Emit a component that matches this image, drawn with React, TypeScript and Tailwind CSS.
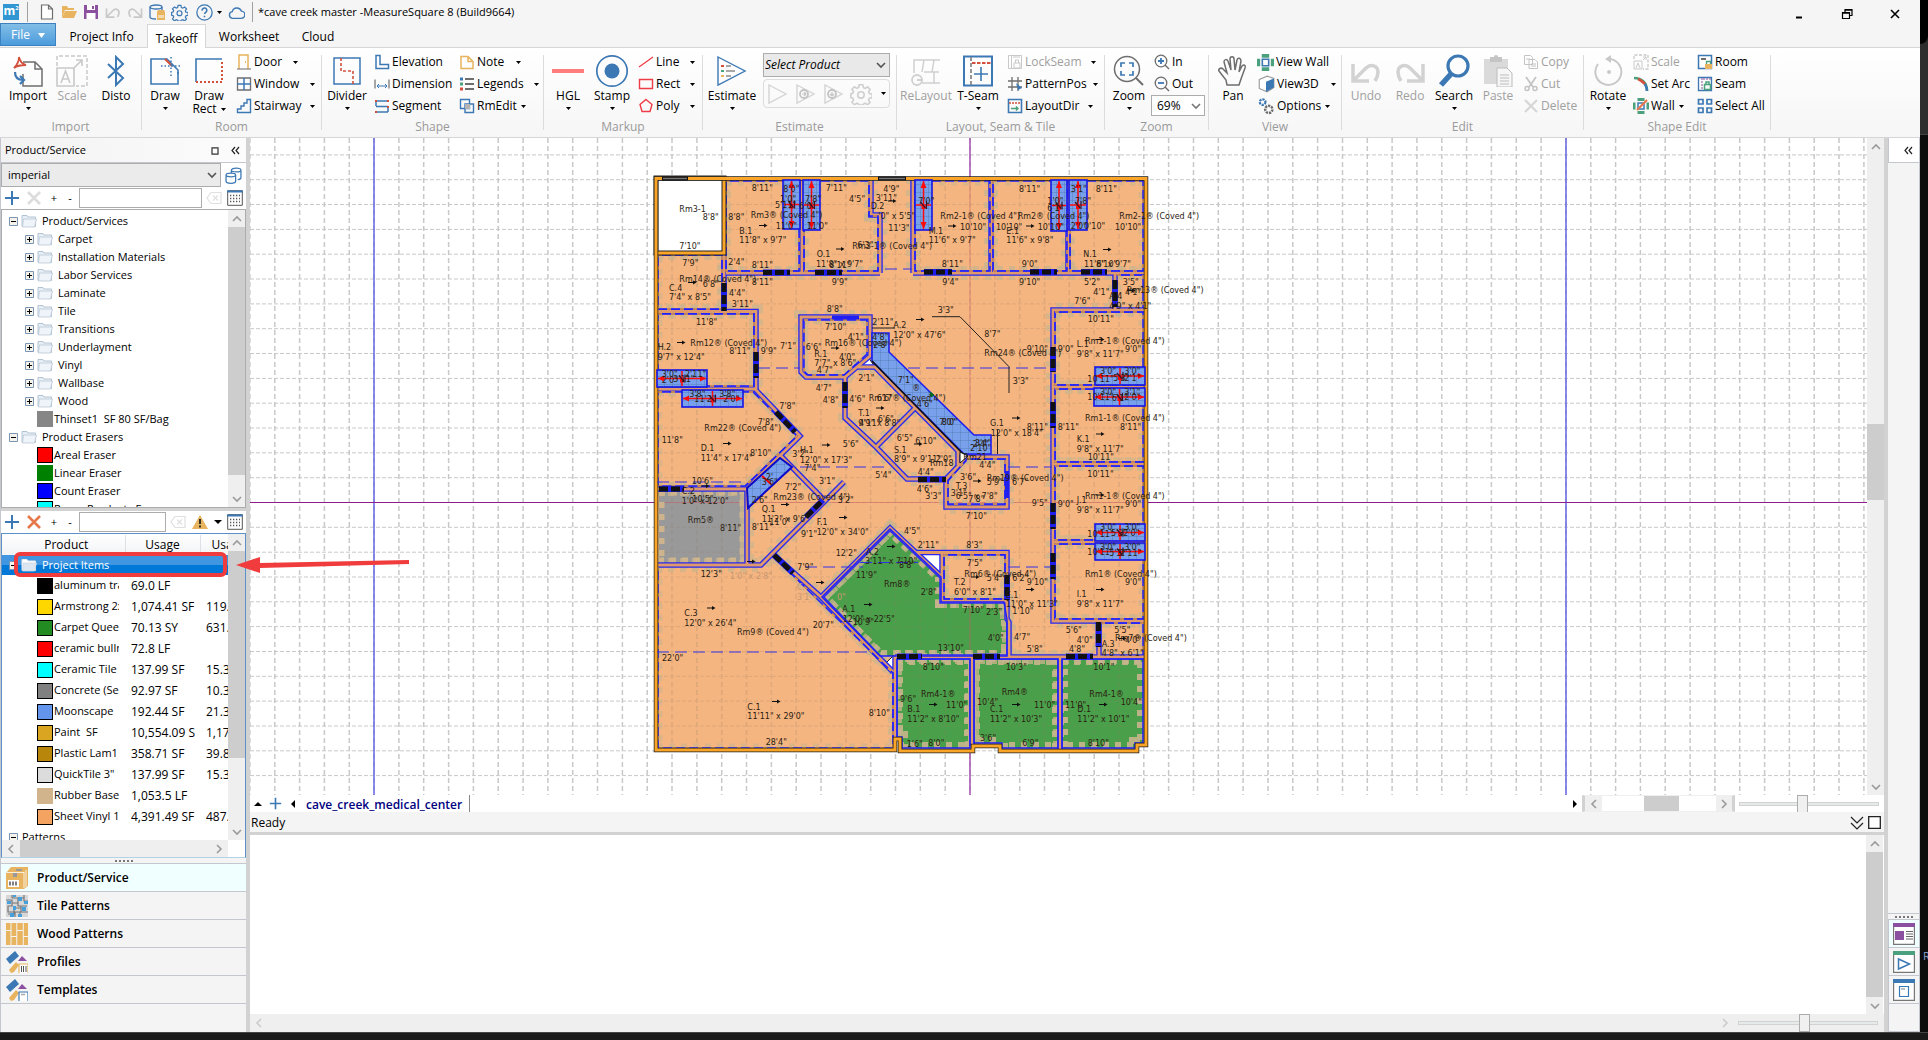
import React from "react";

const BLUE = "#3c78b4";
const RED = "#d2503c";
const GREY = "#c9c9c9";
const DARK = "#6e6e6e";
const GOLD = "#e8b45f";
const GREEN = "#4ba07d";
const PURPLE = "#8c50a0";

type Kids = { children?: React.ReactNode };

function Ico({ s = 16, v = 16, children }: Kids & { s?: number; v?: number }) {
  return (
    <svg width={s} height={s} viewBox={`0 0 ${v} ${v}`} fill="none" className="shrink-0" aria-hidden="true">
      {children}
    </svg>
  );
}

const Tri = ({ className = "" }: { className?: string }) => (
  <svg width="5" height="3" viewBox="0 0 5 3" className={`shrink-0 ${className}`} aria-hidden="true">
    <path d="M0 0h5L2.5 3z" fill="#000" />
  </svg>
);

const Chev = ({ d = "down", c = "#9a9a9a" }: { d?: "down" | "up" | "left" | "right"; c?: string }) => {
  const p = { down: "M1 3l4 4 4-4", up: "M1 7l4-4 4 4", left: "M7 1L3 5l4 4", right: "M3 1l4 4-4 4" }[d];
  return (
    <svg width="10" height="10" viewBox="0 0 10 10" fill="none" className="shrink-0" aria-hidden="true">
      <path d={p} stroke={c} strokeWidth="1.6" />
    </svg>
  );
};

/* ---------- ribbon pieces ---------- */

function Big({ icon, label, sub, arrow, off, wide }: { icon: React.ReactNode; label: string; sub?: string; arrow?: boolean; off?: boolean; wide?: boolean }) {
  return (
    <button className={`flex h-[66px] flex-col items-center ${wide ? "w-[52px]" : "w-11"} ${off ? "text-[#a0a0a0]" : "text-black"}`}>
      <span className="flex h-8 items-center">{icon}</span>
      <span className="mt-[2px] text-xs leading-[14px] whitespace-nowrap">{label}</span>
      {sub ? (
        <span className="flex items-center gap-1 text-xs leading-3">
          {sub}
          <Tri />
        </span>
      ) : (
        arrow && <Tri className="mt-[4px]" />
      )}
    </button>
  );
}

function Small({ icon, label, arrow, off, w = "" }: { icon: React.ReactNode; label: string; arrow?: boolean; off?: boolean; w?: string }) {
  return (
    <button className={`flex h-[22px] items-center gap-[2px] ${off ? "text-[#a0a0a0]" : "text-black"}`}>
      {icon}
      <span className={`text-left text-xs leading-4 whitespace-nowrap ${w}`}>{label}</span>
      {arrow && <Tri />}
    </button>
  );
}

function Group({ name, w, children }: Kids & { name: string; w: string }) {
  return (
    <section className={`flex shrink-0 flex-col ${w}`} aria-label={name}>
      <div className="flex h-full border-r border-[#dcdcdc]">
        <div className="flex w-full flex-col">
          <div className="flex h-[65px]">{children}</div>
          <div className="text-center text-xs leading-[14px] text-[#9a9a9a]">{name}</div>
        </div>
      </div>
    </section>
  );
}

const Col = ({ children, c = "" }: Kids & { c?: string }) => <div className={`-mt-[4px] flex flex-col ${c}`}>{children}</div>;

function Ribbon() {
  return (
    <div className="flex h-[91px] border-t border-b border-[#d6d6d6] bg-linear-to-b from-white to-[#f6f6f6] pt-[7px] pb-[7px]">
      <Group name="Import" w="w-[142px]">
        <div className="flex pl-[6px]">
          <Big label="Import" arrow icon={<Ico s={32} v={32}>
            <path d="M11 7h12l7 7v17H11V19" stroke={DARK} strokeWidth="1.5" /><path d="M23 7v7h7" stroke={DARK} strokeWidth="1.500" />
            <path d="M2 13c3-3 5-7 5-11 1 5 3 7 7 8-5 0-8 0-12 3z" stroke={RED} strokeWidth="1.800" /><path d="M3 17c0 6 3 8 8 8M8 21l4 4-4 4" stroke={BLUE} strokeWidth="2.200" /></Ico>} />
          <Big label="Scale" off icon={<Ico s={32} v={32}>
            <path d="M1 11V1h30v30H20" stroke={GREY} strokeWidth="1.500" strokeDasharray="4 2" /><path d="M1 13h17v18H1zM5 28l4.500-12L14 28M7 24h5M17 14l9-9M20 5h6v6" stroke={GREY} strokeWidth="1.600" /></Ico>} />
          <Big label="Disto" icon={<Ico s={32} v={32}><path d="M8 9l15 14-7 7V2l7 7L8 23" stroke={BLUE} strokeWidth="2" /></Ico>} />
        </div>
      </Group>
      <Group name="Room" w="w-[180px]">
        <div className="flex pl-[1px]">
          <Big label="Draw" arrow icon={<Ico s={32} v={32}>
            <path d="M15 4H2v25h27V17" stroke={BLUE} strokeWidth="1.600" /><path d="M15 4h3l11 11v4" stroke={BLUE} strokeWidth="1.600" /><path d="M16 4l7 7" stroke={RED} strokeWidth="2" /><path d="M22 2v20M12 11h19" stroke={BLUE} strokeWidth="1.500" strokeDasharray="1.500 2" /></Ico>} />
          <Big label="Draw" sub="Rect" icon={<Ico s={32} v={32}>
            <path d="M3 27V4h26" stroke={BLUE} strokeWidth="1.600" /><path d="M3 27h26V5" stroke={RED} strokeWidth="2" strokeDasharray="2 2" /></Ico>} />
        </div>
        <Col c="pl-[5px]">
          <Small label="Door" w="w-[37px]" arrow icon={<Ico><path d="M3 15V1h9v14" stroke={GOLD} strokeWidth="1.500" /><path d="M1 15h14" stroke={DARK} /><path d="M9.500 7v2" stroke={GOLD} /></Ico>} />
          <Small label="Window" w="w-[54px]" arrow icon={<Ico><path d="M1.500 2h13v12h-13z" stroke={DARK} strokeWidth="1.300" /><path d="M8 2v12M1 8h14" stroke={BLUE} strokeWidth="1.500" /></Ico>} />
          <Small label="Stairway" w="w-[54px]" arrow icon={<Ico><path d="M1.500 14.500V11H5V8h3V5h3V1.500h3.500v13z" stroke={BLUE} strokeWidth="1.400" /></Ico>} />
        </Col>
      </Group>
      <Group name="Shape" w="w-[222px]">
        <div className="flex pl-[3px]">
          <Big label="Divider" arrow icon={<Ico s={32} v={32}><path d="M3 3h26v26H3z" stroke={BLUE} strokeWidth="1.500" /><path d="M10 3v13h12v13" stroke={RED} strokeWidth="1.600" strokeDasharray="3 2" /></Ico>} />
        </div>
        <Col c="pl-[5px] w-[90px]">
          <Small label="Elevation" icon={<Ico><path d="M2 1.500h4v9h8.500v4H2z" stroke={BLUE} strokeWidth="1.500" /></Ico>} />
          <Small label="Dimension" icon={<Ico><path d="M1 3.500v9M15 3.500v9" stroke="#8a8a8a" strokeWidth="1.500" /><path d="M3 10h10M5 8l-2 2 2 2M11 8l2 2-2 2" stroke={BLUE} /></Ico>} />
          <Small label="Segment" icon={<Ico><path d="M2 3h12M2 8.500h12M2 14h12M2 3v5M14 9v5" stroke={BLUE} strokeWidth="1.500" /><path d="M1 2h2v2H1zM13 2h2v2h-2zM13 8h2v2h-2zM1 13h2v2H1z" fill={RED} /></Ico>} />
        </Col>
        <Col>
          <Small label="Note" w="w-[37px]" arrow icon={<Ico><path d="M2 2.500h7l5 5v7H2zM9 2.500v5h5" stroke={GOLD} strokeWidth="1.500" /></Ico>} />
          <Small label="Legends" w="w-[55px]" arrow icon={<Ico><path d="M6 3h9M6 8h9M6 13h9" stroke={DARK} strokeWidth="2" /><path d="M1 1.500h3v3H1z" fill={BLUE} /><path d="M1 6.500h3v3H1z" fill={GREEN} /><path d="M1 11.500h3v3H1z" fill={RED} /></Ico>} />
          <Small label="RmEdit" w="w-[42px]" arrow icon={<Ico><path d="M1.500 1.500h9v9h-9zM6 6h8.500v8.500H6z" stroke={BLUE} strokeWidth="1.400" /><path d="M6 6h5v5H6z" fill="#b4b4b4" /></Ico>} />
        </Col>
      </Group>
      <Group name="Markup" w="w-[159px]">
        <div className="flex pl-[2px]">
          <Big label="HGL" arrow icon={<Ico s={32} v={32}><path d="M0 16h32" stroke="#ff7d7d" strokeWidth="4" /></Ico>} />
          <Big label="Stamp" arrow icon={<Ico s={34} v={34}><circle cx="17" cy="17" r="15.200" stroke={BLUE} strokeWidth="1.700" /><circle cx="17" cy="17" r="7.500" fill={BLUE} /></Ico>} />
        </div>
        <Col c="pl-[4px]">
          <Small label="Line" w="w-8" arrow icon={<Ico><path d="M1 13L15 3" stroke="#f03c46" strokeWidth="1.300" /></Ico>} />
          <Small label="Rect" w="w-8" arrow icon={<Ico><path d="M1.500 3.500h13v9h-13z" stroke="#f03c46" strokeWidth="1.400" /></Ico>} />
          <Small label="Poly" w="w-8" arrow icon={<Ico><path d="M8 1.500l6 5-2 7H4l-2-7z" stroke="#f03c46" strokeWidth="1.400" /></Ico>} />
        </Col>
      </Group>
      <Group name="Estimate" w="w-[194px]">
        <div className="flex pl-[3px]">
          <Big wide label="Estimate" arrow icon={<Ico s={32} v={32}><path d="M2 2l27 14L2 30z" stroke={BLUE} strokeWidth="1.400" /><path d="M10 11h5M10 16h9M10 21h5" stroke="#8a8a8a" strokeWidth="1.500" /><path d="M5 10h3v2H5z" fill={RED} /><path d="M5 15h3v2H5z" fill={GREEN} /><path d="M5 20h3v2H5z" fill={GOLD} /></Ico>} />
        </div>
        <div className="-mt-[2px] flex w-[128px] flex-col gap-[2px] pl-[5px]">
          <div className="relative flex h-6 w-[127px] items-center">
            <select aria-label="Select Product" className="h-6 w-full appearance-none border border-[#acacac] bg-[#e9e9e9] pl-[1px] text-xs text-black italic">
              <option>Select Product</option>
            </select>
            <span className="pointer-events-none absolute right-1"><Chev c="#555" /></span>
          </div>
          <div className="flex h-[29px] w-[127px] items-center gap-[6px] rounded-sm border border-[#dcdcdc] pl-[3px]">
            {[0, 1, 2].map((i) => (
              <button key={i} aria-label={`Run ${i + 1}`}>
                <Ico s={22} v={22}><path d="M2 2l17 9-17 9z" stroke="#d4d4d4" strokeWidth="1.400" />{i > 0 && <><circle cx="9" cy="11" r="4" stroke="#c4c4c4" strokeWidth="1.800" /><path d={i === 1 ? "M7 11h4M9 9l2 2-2 2" : "M9 9v4M7 11l2 2 2-2"} stroke="#c4c4c4" strokeWidth="1.200" /></>}</Ico>
              </button>
            ))}
            <button aria-label="Estimate settings" className="-ml-[1px] flex items-center gap-[9px]"><Gear s={22} c="#cfcfcf" /><Tri /></button>
          </div>
        </div>
      </Group>
      <Group name="Layout, Seam &amp; Tile" w="w-[208px]">
        <div className="flex pl-[3px]">
          <Big wide off label="ReLayout" icon={<Ico s={32} v={32}><path d="M4 18V5h26M14 5l-2 12M24 5l-2 12M14 17h15M12 28h18M24 17v11" stroke="#d0d0d0" strokeWidth="1.500" /><circle cx="7" cy="25" r="5" stroke="#d0d0d0" strokeWidth="1.800" /><path d="M7 25h6" stroke="#d0d0d0" strokeWidth="2" /></Ico>} />
          <Big wide label="T-Seam" arrow icon={<Ico s={32} v={32}><path d="M2 1.500h28v29H2z" stroke={BLUE} strokeWidth="2" /><path d="M9 2v28" stroke="#8a8a8a" strokeWidth="1.800" strokeDasharray="4 2" /><path d="M10 8h19" stroke={RED} strokeWidth="2" strokeDasharray="3.500 1.500" /><path d="M19 12v14M12 19h14" stroke={BLUE} strokeWidth="1.600" /></Ico>} />
        </div>
        <Col c="pl-[3px]">
          <Small off label="LockSeam" w="w-16" arrow icon={<Ico><path d="M1.500 1.500h13v13h-13z" stroke={GREY} /><path d="M4.500 2v12M7 9h6v5H7zM8.500 9V6h3v3M6 3h7" stroke={GREY} /></Ico>} />
          <Small label="PatternPos" w="w-[66px]" arrow icon={<Ico><path d="M5 1v14M11 1v14M1 5h14M1 11h14" stroke={DARK} strokeWidth="1.300" /><path d="M9 7l6 5-4 2z" fill={BLUE} /></Ico>} />
          <Small label="LayoutDir" w="w-[61px]" arrow icon={<Ico><path d="M1.500 1.500h13v13h-13z" stroke={BLUE} strokeWidth="1.600" /><path d="M2 5h12" stroke={RED} strokeWidth="1.500" strokeDasharray="2 1" /><path d="M4 10.500h7M9 8.500l2 2-2 2" stroke={GREEN} strokeWidth="1.400" /></Ico>} />
        </Col>
      </Group>
      <Group name="Zoom" w="w-[104px]">
        <div className="flex pl-[2px]">
          <Big label="Zoom" arrow icon={<Ico s={32} v={32}><circle cx="14" cy="14" r="12.500" stroke={DARK} strokeWidth="1.500" /><path d="M23 23l7 7" stroke={DARK} strokeWidth="2" /><path d="M8 12V8h4M16 8h4v4M20 16v4h-4M12 20H8v-4" stroke={BLUE} strokeWidth="1.700" /></Ico>} />
        </div>
        <Col>
          <div className="pl-[3px]">
            {["In", "Out"].map((t) => (
              <Small key={t} label={t} icon={<Ico><circle cx="7" cy="7" r="5.800" stroke={DARK} strokeWidth="1.300" /><path d="M11 11l4 4" stroke={DARK} strokeWidth="1.500" /><path d={t === "In" ? "M4 7h6M7 4v6" : "M4 7h6"} stroke={BLUE} strokeWidth="1.800" /></Ico>} />
            ))}
          </div>
          <div className="relative flex h-[21px] w-[54px] items-center">
            <select aria-label="Zoom level" className="h-full w-full appearance-none border border-[#acacac] bg-white pl-[5px] text-xs">
              <option>69%</option>
            </select>
            <span className="pointer-events-none absolute right-1"><Chev c="#777" /></span>
          </div>
        </Col>
      </Group>
      <Group name="View" w="w-[133px]">
        <div className="flex pl-[2px]">
          <Big label="Pan" icon={<Ico s={32} v={32}><path d="M10 30l-1-5-7-9c-1-2 2-4 4-2l4 4L7 7c0-3 3-3 4-1l3 9-1-11c0-3 4-3 4 0l1 11 2-10c1-3 4-2 4 1l-2 11 3-6c2-2 4-1 3 2l-4 11-2 6z" stroke={DARK} strokeWidth="1.500" /></Ico>} />
        </div>
        <Col c="pl-[2px]">
          <Small label="View Wall" icon={<Ico s={17}><path d="M4.500 0h7v3.500h-7zM4.500 12.500h7V16h-7z" fill={GREEN} /><path d="M0 4.500h3v7H0zM13 4.500h3v7h-3z" fill={GREEN} /><path d="M5 5h6v6H5z" stroke={BLUE} strokeWidth="1.500" /></Ico>} />
          <Small label="View3D" w="w-[52px]" arrow icon={<Ico s={18}><path d="M2 4l7-3 6 2v8l-6 4-7-3z" fill="#fff" stroke="#9a9a9a" /><path d="M8 6l7-3v8l-7 4z" fill={BLUE} /></Ico>} />
          <Small label="Options" w="w-[46px]" arrow icon={<Ico s={18}><circle cx="5" cy="4.500" r="2.500" stroke={BLUE} strokeWidth="2" strokeDasharray="2 .8" /><circle cx="10.500" cy="11" r="3.200" stroke={DARK} strokeWidth="2.200" strokeDasharray="2 .8" /></Ico>} />
        </Col>
      </Group>
      <Group name="Edit" w="w-[242px]">
        <div className="flex pl-[2px]">
          <Big off label="Undo" icon={<Ico s={32} v={32}><path d="M3 9v17h16M4 25L16 13c5-5 12-2 12 4 0 3-1 6-3 9" stroke="#d2d2d2" strokeWidth="3.500" /></Ico>} />
          <Big off label="Redo" icon={<Ico s={32} v={32}><path d="M29 9v17H13M28 25L16 13c-5-5-12-2-12 4 0 3 1 6 3 9" stroke="#d2d2d2" strokeWidth="3.500" /></Ico>} />
          <Big label="Search" arrow icon={<Ico s={34} v={34}><circle cx="21" cy="12" r="10" stroke={BLUE} strokeWidth="3.200" /><path d="M14 20L4 31" stroke={BLUE} strokeWidth="5.500" /></Ico>} />
          <Big off label="Paste" icon={<Ico s={32} v={32}><path d="M2 4h24v25H2z" fill="#dadada" /><path d="M8 2h4a2 2 0 014 0h4v5H8z" fill="#c4c4c4" /><path d="M15 13h10l5 5v14H15z" fill="#f6f6f6" stroke="#bcbcbc" /><path d="M18 20h9M18 23h9M18 26h9M18 29h9" stroke="#bcbcbc" /></Ico>} />
        </div>
        <Col c="pl-[3px]">
          <Small off label="Copy" icon={<Ico><path d="M1.500 1.500h6l2 2v7h-8zM6 5.500h6l2.500 2.500v6.500H6zM3 5h4M8 10h5M8 12h5" stroke="#c4c4c4" /></Ico>} />
          <Small off label="Cut" icon={<Ico><path d="M3 1l7 10M13 1L6 11" stroke="#c4c4c4" strokeWidth="1.800" /><circle cx="4" cy="12.500" r="2" stroke="#c4c4c4" strokeWidth="1.500" /><circle cx="12" cy="12.500" r="2" stroke="#c4c4c4" strokeWidth="1.500" /></Ico>} />
          <Small off label="Delete" icon={<Ico><path d="M2 2l12 12M14 2L2 14" stroke="#d6d6d6" strokeWidth="2.200" /></Ico>} />
        </Col>
      </Group>
      <Group name="Shape Edit" w="w-[187px]">
        <div className="flex pl-[2px]">
          <Big label="Rotate" arrow icon={<Ico s={32} v={32}><path d="M6 9a13 13 0 1012-5" stroke={GREY} strokeWidth="2" /><path d="M19 0v8l-6-4z" fill={GREY} /><circle cx="17" cy="17" r="2" fill={GREY} /></Ico>} />
        </div>
        <Col c="pl-[3px] w-[67px]">
          <Small off label="Scale" icon={<Ico><path d="M1 5V1h14v14h-5" stroke={GREY} strokeDasharray="3 1.500" strokeWidth="1.300" /><path d="M1 7h8v8H1zM3 14l2-5 2 5M10 6l3-3M10 3h3v3" stroke={GREY} /></Ico>} />
          <Small label="Set Arc" icon={<Ico><path d="M1 2c8 0 13 5 13 13" stroke={GREEN} strokeWidth="2.500" /><path d="M5 3c3 1 5 3 7 5" stroke={RED} strokeWidth="2.500" /><path d="M12 8c1 2 2 4 2 7" stroke={BLUE} strokeWidth="2.500" /></Ico>} />
          <Small label="Wall" w="w-[26px]" arrow icon={<Ico><path d="M4.500 0h7v3h-7zM4.500 13h7v3h-7zM0 4.500h2.500v7H0zM13.500 4.500H16v7h-2.500z" fill={GREEN} /><path d="M5 5h6v6H5z" stroke={BLUE} strokeWidth="1.500" /><path d="M4 12L14 2" stroke="#e8784b" strokeWidth="2.200" /></Ico>} />
        </Col>
        <Col>
          <Small label="Room" icon={<Ico><path d="M1.500 1.500h13v13h-13z" stroke={BLUE} strokeWidth="1.500" /><path d="M4 4h5v2H4z" fill={DARK} /><path d="M8 10h7v5H8z" fill={GOLD} /><path d="M9.500 10V7.500h4V10" stroke={GREEN} strokeWidth="1.300" /></Ico>} />
          <Small label="Seam" icon={<Ico><path d="M1.500 1.500h13v13h-13z" stroke={BLUE} strokeWidth="1.300" /><path d="M5 2v12M6 3h8" stroke={PURPLE} strokeDasharray="2 1" /><path d="M7.500 8.500h6v5h-6zM9 8V6h3v2.500" stroke={GREEN} strokeWidth="1.500" /></Ico>} />
          <Small label="Select All" icon={<Ico><path d="M1.500 1.500h4.500v4.500H1.500zM10 1.500h4.500v4.500H10zM1.500 10h4.500v4.500H1.500zM10 10h4.500v4.500H10z" stroke={BLUE} strokeWidth="1.700" /></Ico>} />
        </Col>
      </Group>
    </div>
  );
}

function Gear({ s = 16, c = BLUE }: { s?: number; c?: string }) {
  return (
    <Ico s={s} v={24}>
      <path d="M10 2h4l.6 3 2 .9 2.600-1.700 2.700 2.700-1.700 2.600.9 2 3 .5v4l-3 .6-.9 2 1.700 2.500-2.700 2.700-2.600-1.700-2 .9-.6 1h-4l-.6-1-2-.9-2.600 1.700L2.100 21l1.700-2.600-.9-2-2-.5v-4l2-.6.9-2-1.700-2.500 2.700-2.700 2.600 1.700 2-.9z" stroke={c} strokeWidth="1.700" />
      <circle cx="12" cy="13" r="3.500" stroke={c} strokeWidth="1.700" />
    </Ico>
  );
}

function TitleBar() {
  const q = "flex w-[22px] items-center justify-center";
  return (
    <header className="flex h-6 items-start bg-[#f5f5f5]">
      <div className="flex h-[22px] items-center pt-[2px] pl-[3px]">
        <span className="flex h-4 w-4 items-start justify-center bg-[#3296d2] text-xs leading-[14px] font-bold text-white">m<sup className="mt-1 text-[6px] leading-none">2</sup></span>
        <span className="mr-2 ml-2 h-5 w-px bg-[#a0a0a0]" />
        <button aria-label="New" className={q}><Ico><path d="M2.500 1h7l4 4v10h-11zM9.500 1v4h4" stroke={DARK} strokeWidth="1.200" fill="#fff" /></Ico></button>
        <button aria-label="Open" className={q}><Ico><path d="M1 14V2h5l1 2h6v2H4z" fill={GOLD} /><path d="M4 7h12l-3 7H1z" fill={GOLD} /></Ico></button>
        <button aria-label="Save" className={q}><Ico><path d="M1 1h14v14H1z" fill={PURPLE} /><path d="M4 1h8v5H4zM3.500 9h9v6h-9z" fill="#fff" /><path d="M9 2h2v3H9z" fill={PURPLE} /></Ico></button>
        <button aria-label="Undo" className={q}><Ico s={16} v={32}><path d="M3 9v17h16M4 25L16 13c5-5 12-2 12 4 0 3-1 6-3 9" stroke={GREY} strokeWidth="3.500" /></Ico></button>
        <button aria-label="Redo" className={q}><Ico s={16} v={32}><path d="M29 9v17H13M28 25L16 13c-5-5-12-2-12 4 0 3 1 6 3 9" stroke={GREY} strokeWidth="3.500" /></Ico></button>
        <button aria-label="Database" className={q}><Ico><ellipse cx="7" cy="3" rx="6" ry="2" stroke={BLUE} strokeWidth="1.300" /><path d="M1 3v10c0 1.500 3 2 6 2M13 3v4" stroke={BLUE} strokeWidth="1.300" /><path d="M8 8h8v8H8z" fill={GOLD} /><path d="M9 6h6l1 2H8z" fill={GOLD} /><path d="M10 11v3M12 11v3M14 11v3" stroke="#fff" /></Ico></button>
        <button aria-label="Settings" className={q}><Gear s={17} /></button>
        <button aria-label="Help" className="ml-[2px] flex w-[33px] items-center gap-1 pl-[4px]"><Ico s={17}><circle cx="8" cy="8" r="7.200" stroke={BLUE} strokeWidth="1.200" /><path d="M5.800 6.200a2.200 2.200 0 114 1c-.8.800-1.800 1-1.800 2.300M8 11v1.500" stroke={BLUE} strokeWidth="1.500" /></Ico><Tri /></button>
        <button aria-label="Cloud" className={q}><Ico s={17}><path d="M4 13.500a3.200 3.200 0 010-6.300 4.500 4.500 0 018.600-.5 3.400 3.400 0 01-.3 6.800z" stroke={BLUE} strokeWidth="1.300" /></Ico></button>
        <span className="mr-[5px] ml-[5px] h-5 w-px bg-[#a0a0a0]" />
        <h1 className="text-[11px]">*cave creek master -MeasureSquare 8 (Build9664)</h1>
      </div>
      <div className="ml-auto flex h-7 items-center pr-[1px]">
        <button aria-label="Minimize" className="flex w-12 justify-center"><Ico s={12} v={12}><path d="M3 9.500h6" stroke="#000" strokeWidth="2" /></Ico></button>
        <button aria-label="Restore" className="flex w-12 justify-center"><Ico s={12} v={12}><path d="M4 4V1.500h7v6H8.500M1.500 4.500h7v6h-7z" stroke="#000" strokeWidth="1.200" /><path d="M4 2h7M1.500 5h7" stroke="#000" strokeWidth="1.500" /></Ico></button>
        <button aria-label="Close" className="flex w-12 justify-center"><Ico s={12} v={12}><path d="M2 2l8 8M10 2l-8 8" stroke="#000" strokeWidth="1.600" /></Ico></button>
      </div>
    </header>
  );
}

/* ---------- left panel ---------- */

const Folder = ({ white }: { white?: boolean }) => (
  <Ico s={16}>
    <path d="M1 13.500V2.500h5l1 1.500h7.500v9.500z" fill={white ? "#fff" : "#e6eef5"} stroke={white ? "#e8e8e8" : "#b4c3d2"} />
    <path d="M2.500 6h13l-2 8H1.500z" fill={white ? "#dce6f0" : "#eef4f9"} stroke={white ? "#c8d7e6" : "#b9c8d7"} strokeWidth=".8" />
  </Ico>
);

const Toggle = ({ open }: { open?: boolean }) => (
  <Ico s={9} v={9}>
    <path d="M.5.5h8v8h-8z" fill="#f5f2ea" stroke="#7b96b4" />
    <path d={open ? "M2 4.500h5" : "M2 4.500h5M4.500 2v5"} stroke="#000" />
  </Ico>
);

const Swatch = ({ c, edge = "#000" }: { c: string; edge?: string }) => (
  <span className="h-4 w-4 shrink-0 border" style={{ background: c, borderColor: edge }} />
);

const PlusIco = ({ c = BLUE, s = 16 }: { c?: string; s?: number }) => (
  <Ico s={s}><path d="M8 1v14M1 8h14" stroke={c} strokeWidth="2" /></Ico>
);
const CrossIco = ({ c }: { c: string }) => (
  <Ico><path d="M2 2l12 12M14 2L2 14" stroke={c} strokeWidth="2.600" /></Ico>
);
const GridIco = () => (
  <Ico><path d="M.7.7h14.600v14.600H.7z" fill="#fff" stroke="#555" /><path d="M0 1.500h16" stroke={BLUE} strokeWidth="2" /><path d="M3 5.500h10M3 8.500h10M3 11.500h10" stroke="#555" strokeWidth="1.300" strokeDasharray="1.300 1.700" /></Ico>
);

function PanelTools({ warn }: { warn?: boolean }) {
  return (
    <div className="flex h-[22px] shrink-0 items-center bg-white pr-[3px] pl-[3px]">
      <button aria-label="Add"><PlusIco /></button>
      <button aria-label="Remove" className="ml-[6px]"><CrossIco c={warn ? "#e6784b" : "#dcdcdc"} /></button>
      <button className="ml-[4px] w-4 text-center text-[11px] leading-4">+</button>
      <button className="w-4 text-center text-[11px] leading-4">-</button>
      <input aria-label={warn ? "Filter project items" : "Filter products"} className={`ml-[1px] h-5 border border-[#acacac] bg-white px-1 text-xs ${warn ? "w-[87px]" : "w-[123px]"}`} />
      <button aria-label="Clear filter" className="ml-[4px]"><Ico><path d="M5 2.500h10v11H5L1 8zM7 5.500l5 5M12 5.500l-5 5" stroke="#e0e0e0" strokeWidth="1.200" /></Ico></button>
      {warn && (
        <button aria-label="Warnings" className="ml-[6px] flex items-center gap-[6px]">
          <Ico><path d="M8 1l8 14H0z" fill={GOLD} /><path d="M8 5v5M8 11.500v2" stroke="#222" strokeWidth="1.800" /></Ico>
          <svg width="8" height="4" viewBox="0 0 8 4" aria-hidden="true"><path d="M0 0h8L4 4z" fill="#000" /></svg>
        </button>
      )}
      <button aria-label="Columns" className="ml-auto"><GridIco /></button>
    </div>
  );
}

function VBar({ top, bottom }: { top: string; bottom: string }) {
  return (
    <div className="flex w-[17px] shrink-0 flex-col bg-[#efefef]">
      <span className="flex h-[17px] items-center justify-center"><Chev d="up" /></span>
      <span className={top} />
      <span className="flex-1 bg-[#cdcdcd]" />
      <span className={bottom} />
      <span className="flex h-[17px] items-center justify-center"><Chev /></span>
    </div>
  );
}

const FOLDERS = ["Carpet", "Installation Materials", "Labor Services", "Laminate", "Tile", "Transitions", "Underlayment", "Vinyl", "Wallbase", "Wood"];
const ERASERS: [string, string][] = [["#ff0000", "Areal Eraser"], ["#008000", "Linear Eraser"], ["#0000ff", "Count Eraser"], ["#00ffff", "Room Products Eraser"]];
const ITEMS: [string, string, string, string][] = [
  ["#000000", "aluminum transition", "69.0 LF", ""],
  ["#ffd700", "Armstrong 2x2", "1,074.41 SF", "119.38"],
  ["#228b22", "Carpet Queen", "70.13 SY", "631.17"],
  ["#ff0000", "ceramic bullnose", "72.8 LF", ""],
  ["#00ffff", "Ceramic Tile", "137.99 SF", "15.33"],
  ["#808080", "Concrete (Sealed)", "92.97 SF", "10.33"],
  ["#6495ed", "Moonscape", "192.44 SF", "21.38"],
  ["#daa520", "Paint  SF", "10,554.09 SF", "1,172.68"],
  ["#b8860b", "Plastic Lam1", "358.71 SF", "39.86"],
  ["#dcdcdc", "QuickTile 3\"", "137.99 SF", "15.33"],
  ["#d2b48c", "Rubber Base", "1,053.5 LF", ""],
  ["#f4a460", "Sheet Vinyl 12", "4,391.49 SF", "487.94"],
];

const Tool = () => (
  <><path d="M0 8l9-8 4 5-9 8z" fill={BLUE} /><path d="M12 10l4-5 5 5z" fill={PURPLE} /><path d="M3 19l7-8 3 3-5 7-3 1z" fill={GOLD} /></>
);

const NAV: [string, React.ReactNode][] = [
  ["Product/Service", <><path d="M0 6l5-6h17v19l-4 3H0z" fill={GOLD} /><path d="M0 5.500h18M18 5v16M20 3v17" stroke="#fff" strokeWidth=".8" /><path d="M7 6h4v4H7zM10 2h6v2h-6z" fill="#999" /><path d="M2 13h11v7H2z" fill="#fff" /><path d="M4 14.500v4M7 14.500v4M10 14.500v4" stroke="#555" strokeWidth="1.500" /></>],
  ["Tile Patterns", <><path d="M0 0h22v22H0z" fill="#d7d7d7" /><path d="M0 5h6v6H2v6h7v5M6 3h6v8h9M12 8h-6M6 0v3M18 0v6h4M12 3h6M9 17h5v5M15 11v6h7M15 13H8v6H2" stroke="#777" strokeWidth="1.200" /><path d="M1 6h4v3H1zM7 0h3v2H7zM12 2h4v4h-4zM7 11h3v4H7zM16 12h4v4h-4zM4 18h4v4H4zM18 6h4v3h-4zM12 19h4v3h-4z" fill="#46a0dc" /></>],
  ["Wood Patterns", <><path d="M0 0h4.500v7H0zM0 8h4.500v14H0zM5.500 0h4.800v13H5.500zM5.500 14h4.800v8H5.500zM11.300 0h5.500v7h-5.500zM11.300 8h5.500v14h-5.500zM17.800 0H22v13h-4.200zM17.800 14H22v8h-4.200z" fill={GOLD} /></>],
  ["Profiles", <><Tool /><path d="M13 22v-9h9v9" fill="#fff" stroke={GOLD} strokeWidth="1.200" /><path d="M15.500 15v6M17.500 15v6M20 15v6" stroke="#555" /></>],
  ["Templates", <><Tool /><path d="M13 22v-9h9v9" fill="#fff" stroke={BLUE} strokeWidth="1.200" /><path d="M15 15.500h4" stroke="#aaa" strokeWidth="1.500" /></>],
];

const Dots = () => (
  <div className="flex h-[5px] shrink-0 items-center justify-center gap-[2px] bg-[#f4f4f4]">
    {[0, 1, 2, 3, 4].map((i) => <span key={i} className="h-[2px] w-[2px] bg-[#777]" />)}
  </div>
);

function LeftPanel() {
  return (
    <aside className="flex w-[246px] shrink-0 flex-col border-l border-[#c4c7ce] bg-white">
      <div className="flex h-[25px] shrink-0 items-center border-b border-[#c4c7ce] bg-linear-to-r from-[#f2f2f2] to-[#fcfcfc] pt-[1px] pl-1">
        <h2 className="text-[11px]">Product/Service</h2>
        <button aria-label="Dock" className="ml-auto"><Ico s={8} v={8}><path d="M1 .8h6v6.400H1z" stroke="#333" strokeWidth="1.200" /></Ico></button>
        <button aria-label="Collapse" className="mr-[6px] ml-[12px]"><Ico s={9} v={9}><path d="M4 1L1 4.500 4 8M8 1L5 4.500 8 8" stroke="#222" strokeWidth="1.200" /></Ico></button>
      </div>
      <div className="flex h-6 shrink-0 items-center">
        <div className="relative flex h-6 flex-1 items-center">
          <select aria-label="Units" className="h-6 w-full appearance-none border border-[#acacac] bg-[#ebebeb] pl-[6px] text-[11px]"><option>imperial</option></select>
          <span className="pointer-events-none absolute right-1"><Chev c="#555" /></span>
        </div>
        <button aria-label="Databases" className="mx-[4px]"><Ico s={17}><path d="M6 3v3M6 3c0-2.500 9-2.500 9 0v7c0 1-1 1.500-3 1.800M6 3c0 2.200 9 2.200 9 0" stroke={BLUE} strokeWidth="1.200" /><path d="M1 7.500v6c0 2.500 9 2.500 9 0v-6M1 7.500c0-2.300 9-2.300 9 0s-9 2.300-9 0z" fill="#fff" stroke={BLUE} strokeWidth="1.200" /></Ico></button>
      </div>
      <PanelTools />
      <div className="flex h-[299px] shrink-0 overflow-hidden border border-[#acacac]">
        <ul className="flex-1 overflow-hidden pt-[2px] text-[11px]">
          <li className="flex h-[18px] items-center pl-[7px]"><Toggle open /><span className="mr-[5px] ml-[3px]"><Folder /></span>Product/Services</li>
          {FOLDERS.map((f) => (
            <li key={f} className="flex h-[18px] items-center pl-[23px] whitespace-nowrap"><Toggle /><span className="mr-[5px] ml-[3px]"><Folder /></span>{f}</li>
          ))}
          <li className="flex h-[18px] items-center gap-[1px] pl-[35px] whitespace-pre"><Swatch c="#868686" edge="#868686" />{"Thinset1  SF 80 SF/Bag"}</li>
          <li className="flex h-[18px] items-center pl-[7px]"><Toggle open /><span className="mr-[5px] ml-[3px]"><Folder /></span>Product Erasers</li>
          {ERASERS.map(([c, t]) => (
            <li key={t} className="flex h-[18px] items-center gap-[1px] pl-[35px]"><Swatch c={c} edge={c === "#008000" ? c : "#000"} />{t}</li>
          ))}
        </ul>
        <VBar top="h-0" bottom="h-[15px]" />
      </div>
      <div className="h-[3px] shrink-0 bg-[#d2d2d2]" />
      <PanelTools warn />
      <div className="flex min-h-0 flex-1 flex-col border border-[#5a91c8] border-b-[#b4d2e6]">
        <div className="flex min-h-0 flex-1">
          <div className="relative min-w-0 flex-1">
            <div className="absolute inset-0 overflow-hidden pt-[1px]">
              <table className="w-[300px] table-fixed border-collapse text-xs">
                <colgroup><col className="w-[123px]" /><col className="w-[75px]" /><col className="w-[102px]" /></colgroup>
                <thead>
                  <tr className="h-5 bg-linear-to-b from-white to-[#f2f3f5]">
                    <th className="border-r border-[#dde1e6] pl-[6px] font-normal">Product</th>
                    <th className="border-r border-[#dde1e6] font-normal">Usage</th>
                    <th className="pl-[11px] text-left font-normal">Usage 2</th>
                  </tr>
                </thead>
                <tbody>
                  <tr className="h-5 bg-linear-to-b from-[#4096e0] from-50% to-[#0078d7] to-50% text-white">
                    <td colSpan={3}><div className="flex items-center pl-[7px] text-[11px]"><Toggle open /><span className="mr-[5px] ml-[3px]"><Folder white /></span>Project Items</div></td>
                  </tr>
                  {ITEMS.map(([c, n, u, v]) => (
                    <tr key={n} className="h-[21px]">
                      <td><div className="ml-[35px] flex w-[82px] items-center gap-[1px] overflow-hidden text-[11px] whitespace-pre"><Swatch c={c} edge={n === "Rubber Base" ? c : "#000"} />{n}</div></td>
                      <td><div className="ml-[6px] w-[64px] overflow-hidden whitespace-nowrap">{u}</div></td>
                      <td className="pl-[6px]">{v}</td>
                    </tr>
                  ))}
                </tbody>
              </table>
              <div className="mt-[2px] flex items-center gap-1 pl-[7px] text-[11px] leading-4"><Toggle open />Patterns</div>
            </div>
            <div className="absolute top-[18px] left-[12px] h-[25px] w-[213px] rounded-md border-4 border-[#f03c3c]" />
            <svg className="absolute top-[19px] left-[234px] z-10" width="174" height="24" viewBox="0 0 174 24" aria-hidden="true">
              <path d="M0 12L24 4v6l149-3v4L24 15v5z" fill="#f03c3c" />
            </svg>
          </div>
          <VBar top="h-0" bottom="h-[65px]" />
        </div>
        <div className="mr-[17px] flex h-[17px] shrink-0 items-center bg-[#efefef] pl-1">
          <Chev d="left" /><span className="ml-1 h-full w-[60px] bg-[#cdcdcd]" /><span className="mr-1 ml-auto flex"><Chev d="right" /></span>
        </div>
      </div>
      <Dots />
      <nav className="flex h-[169px] shrink-0 flex-col border-t border-[#c4c7ce] bg-[#f4f4f4]">
        {NAV.map(([t, i], k) => (
          <button key={t} className={`flex h-7 items-center gap-[9px] border-b border-[#c4c7ce] pl-[5px] text-xs font-semibold ${k === 0 ? "bg-[#f0ffff]" : ""}`}>
            <Ico s={22} v={22}>{i}</Ico>{t}
          </button>
        ))}
      </nav>
    </aside>
  );
}

/* ---------- floor plan ---------- */

const WALLS = [
  "M802 178V272", "M871 178V215H880V273", "M726 273H880", "M913 178V273", "M991 178V272", "M1068 178V272", "M913 273H1146",
  "M656 253H726", "M724 253V311", "M656 311.500H756V389", "M656 389H755L800 436L747 488", "M656 489H747V565", "M781 456L825 501", "M656 565H761L844 482",
  "M801 317H870V356L845 377H806L801 372Z", "M845 377V418L876 447L907 479H946L965 459", "M876 447L915 408", "M858 367H875L964 457",
  "M964 457H1007V507H946V480", "M958 451V465", "M1115 273V310", "M1146 310H1053V621H1146", "M1053 387H1146", "M1053 464H1146", "M1053 542H1146", "M1099 621V656",
  "M774 555L821 597L893 672", "M821 597L890 528L942 577V601H1007", "M917 552.500H1007V601", "M942 553V577", "M1007 601V619L1009 622V656", "M895 657H1146", "M895 657V738", "M972 657V746", "M1060 657V751",
  "M724 180V251",
];
const INNER = [
  "M726 181H799V271H726Z", "M804 181H869V216H878V271H804Z", "M915 181H990V271H915Z", "M993 181H1067V271H993Z", "M1070 181H1143V271H1070Z",
  "M658 255H722V309H658Z", "M658 314H754V386H658Z", "M658 392H753L797 436L745 486H658Z", "M658 567V748H893V673L773 556",
  "M1117 275H1143V308", "M1055 312H1143V385H1055Z", "M1055 389H1143V462H1055Z", "M1055 466H1143V540H1055Z", "M1055 544H1143V619H1055Z", "M1101 623H1143V655",
  "M804 320H867V354L844 375H808L804 371Z", "M967 459H1005V504H948V481Z", "M944 555H1005V599H944Z",
];
const GREENS = [
  "M890 529L822 597L880 656H1007V620L1004 602H941V577Z",
  "M897 659H970V748H902V737H897Z", "M974 659H1058V748H1002V743H974Z", "M1062 659H1143V743H1135V748H1062Z",
];
const DOORS = [
  "M763 272.500h27", "M815 272.500h27", "M924 272h28", "M1030 272h27", "M1081 272h26", "M724 283v28", "M756 352v26", "M776 412l19 20", "M845 382v26",
  "M1115 280v27", "M1053 347v25", "M1053 402v26", "M1053 503v26", "M1053 553v26", "M1098.500 622v25", "M1007 575v25", "M897 656.500h25", "M973 656.500h27",
  "M1066 656.500h27", "M918 479.500h28", "M659 489h25", "M806 517l17-17", "M774 555l19 18",
];
const CABINETS: [number, number, number, number][] = [
  [783, 180, 17, 49], [803, 180, 17, 50], [915, 180, 17, 50], [1051, 180, 16, 51], [1069, 180, 18, 50], [657, 370, 50, 17], [682, 390, 61, 17],
  [1095, 367, 50, 18], [1094, 388, 51, 18], [1095, 524, 50, 17], [1095, 543, 50, 17],
];
const ARROWS: [number, number][] = [
  [763, 225.5], [840, 249], [692, 282.5], [681, 342.5], [835, 348], [727, 443.5], [826, 445], [880, 408], [892, 201], [952, 226], [1030, 226], [1107, 249.5],
  [920, 319.5], [1100, 339.5], [1016, 418], [1100, 434], [918, 444], [705, 486], [785, 504.5], [843, 517.5], [751, 561.5], [891, 546.5], [820, 582.5], [868, 604.5],
  [711, 608], [776, 701.5], [977, 481], [975, 577], [1030, 589.5], [1100, 589.5], [933, 704.5], [1016, 704.5], [1103, 704.5], [1131, 290.5], [1122, 638.5], [1100, 495],
];

/* Labels are grouped by wing; positions are in thirds of a plan unit from the wing's origin. */
type Wing = { dx: number; dy: number; items: [number, number, string][] };
const WINGS: Wing[] = [
  { dx: 640, dy: 165, items: [
    [118, 132, "Rm3-1"], [188, 156, "8'8\""], [118, 243, "7'10\""], [335, 69, "8'11\""], [430, 72, "8'0\""], [265, 156, "8'8\""], [332, 150, "Rm3® (Coved 4\")"], [298, 198, "B.1"], [298, 225, "11'8\" x 9'7\""],
    [407, 183, "11'0\""], [265, 291, "2'4\""], [335, 300, "8'11\""], [335, 351, "8'11\""], [557, 69, "7'11\""], [627, 102, "4'5\""], [500, 183, "11'0\""], [530, 267, "O.1"], [528, 297, "11'8\" x 9'7\""], [568, 300, "8'11\""],
    [575, 351, "9'9\""], [637, 243, "Rm3-1® (Coved 4\")"], [652, 241, "6'3\""], [730, 72, "4'9\""], [707, 99, "3'11\""], [692, 123, "D.2"], [715, 154, "'0\" x 5'5\""], [745, 189, "11'3\""], [405, 120, "5'11\""], [420, 102, "1'0\""], [478, 124, "6'0\""], [495, 102, "7'8\""],
    [127, 294, "7'9\""], [118, 342, "Rm14® (Coved 4\")"], [188, 357, "6'8\""], [87, 370, "C.4"], [87, 397, "7'4\" x 8'5\""], [267, 384, "4'4\""], [275, 417, "3'11\""], [168, 471, "11'8\""], [151, 534, "Rm12® (Coved 4\")"], [268, 558, "8'11\""], [362, 558, "9'9\""], [420, 543, "7'1\""],
    [53, 547, "H.2"], [53, 576, "9'7\" x 12'4\""], [65, 627, "3'0\""], [135, 627, "2'11\""], [65, 645, "2'0\""], [100, 642, "3'11\""], [148, 687, "3'8\""], [238, 687, "3'8\""], [163, 702, "11'2\""], [250, 702, "2'0\""],
    [560, 432, "8'8\""], [555, 486, "7'10\""], [697, 471, "2'11\""], [760, 481, "A.2"], [760, 510, "12'0\" x 47'6\""], [623, 517, "4'1\""], [697, 516, "4'8\""], [700, 540, "2'8\""], [497, 546, "6'6\""], [554, 535, "Rm16® (Coved 4\")"], [523, 566, "R.1"], [523, 594, "7'7\" x 8'6\""], [597, 576, "4'0\""], [530, 615, "4'7\""],
    [655, 639, "2'1\""], [527, 669, "4'7\""], [548, 705, "4'8\""], [628, 702, "4'6\""], [686, 699, "Rm17® (Coved 4\")"], [710, 700, "6'6\""], [773, 645, "7'1\""], [655, 745, "T.1"], [655, 773, "9'9\" x 8'8\""], [657, 773, "4'11\""], [713, 762, "6'6\""], [770, 819, "6'5\""],
    [418, 723, "7'8\""], [353, 771, "7'8\""], [193, 789, "Rm22® (Coved 4\")"], [65, 825, "11'8\""], [182, 850, "D.1"], [182, 879, "11'4\" x 17'4\""], [330, 864, "8'10\""], [457, 867, "3'2\""], [480, 856, "H.1"], [480, 885, "12'0\" x 17'3\""], [608, 837, "5'6\""], [762, 856, "S.1"], [762, 883, "8'9\" x 9'11\""],
  ] },
  { dx: 900, dy: 165, items: [
    [55, 108, "7'0\""], [121, 153, "Rm2-1® (Coved 4\")"], [86, 199, "M.1"], [86, 225, "11'6\" x 9'7\""], [180, 186, "10'10\""], [125, 297, "8'11\""], [127, 351, "9'4\""], [357, 72, "8'11\""], [353, 153, "Rm2® (Coved 4\")"], [288, 186, "10'10\""], [319, 199, "E.1"], [319, 225, "11'6\" x 9'8\""], [413, 186, "10'10\""],
    [365, 297, "9'0\""], [357, 351, "9'10\""], [587, 72, "8'11\""], [658, 153, "Rm2-1® (Coved 4\")"], [645, 186, "10'10\""], [552, 184, "0'10\""], [550, 267, "N.1"], [552, 297, "11'6\" x 9'7\""], [588, 297, "8'10\""], [552, 351, "5'2\""], [668, 351, "3'5\""], [580, 381, "4'1\""], [680, 376, "Rm13® (Coved 4\")"], [675, 381, "4'1\""], [628, 394, "A.4"], [628, 423, "4'9\" x 4'1\""],
    [523, 408, "7'6\""], [563, 462, "10'11\""], [442, 108, "1'0\""], [442, 128, "6'1\""], [512, 72, "3'1\""], [512, 182, "2'0\""], [525, 108, "7'8\""], [113, 435, "3'3\""], [253, 507, "8'7\""], [253, 564, "Rm24® (Coved 4\")"], [338, 648, "3'3\""], [380, 552, "9'10\""], [473, 552, "9'0\""], [530, 538, "L.1"], [530, 567, "9'8\" x 11'7\""], [555, 528, "Rm1-1® (Coved 4\")"], [675, 552, "9'0\""],
    [562, 642, "10'11\""], [600, 619, "3'0\""], [673, 619, "3'0\""], [640, 640, "5'3\""], [673, 640, "2'1\""], [562, 695, "10'11\""], [600, 682, "3'0\""], [673, 682, "3'1\""], [635, 700, "6'1\""], [673, 695, "2'0\""], [555, 760, "Rm1-1® (Coved 4\")"], [660, 786, "8'11\""], [530, 822, "K.1"], [530, 852, "9'8\" x 11'7\""], [563, 877, "10'11\""], [380, 786, "8'11\""], [473, 786, "8'11\""],
    [37, 669, "®"], [50, 717, "4'6\""], [118, 772, "7'0\""], [125, 772, "8'0\""], [218, 837, "2'4\""], [210, 850, "2'10\""], [225, 835, "3'4\""], [270, 774, "G.1"], [272, 804, "12'0\" x 18'4\""], [46, 828, "6'10\""], [107, 882, "2'0\""], [190, 877, "Rm21"], [90, 895, "Rm18"], [238, 899, "4'4\""],
  ] },
  { dx: 640, dy: 460, items: [
    [155, 63, "10'6\""], [125, 94, "C.2"], [125, 123, "1'0\" x 12'0\""], [157, 117, "10'5\""], [143, 180, "Rm5®"], [240, 204, "8'11\""], [335, 201, "8'11\""], [335, 121, "2'6\""], [365, 65, "3'6\""], [378, 50, "2'"], [493, 24, "7'4\""], [435, 81, "7'2\""], [537, 63, "3'1\""], [400, 111, "Rm23® (Coved 4\")"], [593, 120, "3'2\""], [365, 148, "Q.1"], [365, 177, "11'2\" x 9'6\""], [388, 186, "11'0\""],
    [706, 45, "5'4\""], [530, 186, "F.1"], [530, 216, "12'0\" x 34'0\""], [483, 222, "9'1\""], [587, 279, "12'2\""], [647, 345, "11'9\""], [678, 276, "A.2"], [675, 303, "3'11\" x 7'10\""], [777, 316, "8'8\""], [792, 213, "4'5\""], [732, 373, "Rm8®"], [472, 321, "7'9\""], [182, 342, "12'3\""], [607, 448, "A.1"], [608, 477, "12'0\" x 22'5\""], [638, 487, "10'9\""], [518, 495, "20'7\""],
    [133, 459, "C.3"], [133, 489, "12'0\" x 26'4\""], [291, 516, "Rm9® (Coved 4\")"], [66, 594, "22'0\""], [322, 742, "C.1"], [322, 768, "11'11\" x 29'0\""], [686, 759, "8'10\""], [377, 846, "28'4\""],
  ] },
  { dx: 900, dy: 460, items: [
    [53, 36, "4'4\""], [50, 87, "4'6\""], [76, 108, "3'3\""], [180, 51, "3'6\""], [260, 54, "Rm19® (Coved 4\")"], [260, 66, "5'9\""], [336, 66, "6'7\""], [167, 79, "T.3"], [167, 107, "6'5\" x 7'8\""], [152, 99, "3'1\""], [205, 118, "7'8\""], [197, 168, "7'10\""], [395, 129, "9'5\""], [473, 132, "9'0\""], [562, 42, "10'11\""], [555, 108, "Rm1-1® (Coved 4\")"], [530, 121, "J.1"], [530, 150, "9'8\" x 11'7\""], [675, 132, "9'0\""],
    [562, 222, "10'11\""], [600, 202, "3'0\""], [673, 202, "3'0\""], [633, 220, "5'3\""], [670, 220, "2'0\""], [562, 276, "10'11\""], [600, 262, "3'0\""], [673, 262, "3'0\""], [628, 280, "5'3\""], [660, 280, "2'11\""], [555, 342, "Rm1® (Coved 4\")"], [675, 366, "9'0\""], [530, 403, "I.1"], [530, 432, "9'8\" x 11'7\""], [53, 255, "2'11\""], [199, 255, "8'3\""], [200, 309, "7'5\""], [193, 342, "Rm6® (Coved 4\")"], [260, 354, "5'4\""], [337, 354, "6'2\""], [380, 366, "9'10\""],
    [162, 367, "T.2"], [162, 396, "6'0\" x 8'1\""], [317, 405, "E.1"], [317, 432, "11'0\" x 11'3\""], [337, 453, "1'10\""], [62, 396, "2'8\""], [188, 450, "7'10\""], [258, 456, "2'3\""], [263, 534, "4'0\""], [342, 531, "4'7\""], [380, 568, "5'8\""], [497, 510, "5'6\""], [643, 510, "5'5\""], [530, 540, "4'0\""], [507, 568, "4'8\""], [645, 535, "Rm7® (Coved 4\")"], [675, 541, "4'0\""], [605, 552, "A.3"], [605, 578, "4'8\" x 6'1\""],
    [113, 564, "13'10\""], [68, 621, "8'10\""], [317, 621, "10'3\""], [580, 621, "10'1\""], [63, 702, "Rm4-1®"], [0, 717, "9'6\""], [138, 736, "11'0\""], [22, 748, "B.1"], [22, 777, "11'2\" x 8'10\""], [20, 852, "1'6\""], [85, 849, "8'0\""], [305, 697, "Rm4®"], [231, 726, "10'4\""], [402, 736, "11'0\""], [270, 748, "C.1"], [270, 777, "11'2\" x 10'3\""], [240, 834, "3'6\""], [367, 849, "6'9\""], [568, 702, "Rm4-1®"], [495, 736, "11'0\""], [662, 726, "10'4\""], [532, 748, "D.1"], [532, 777, "11'2\" x 10'1\""], [563, 849, "8'10\""],
  ] },
];

const BUILDING = "M656 178.500H1146V745H1137V751H1000V746H973V751H900V739H895V750H656Z";
const STRIP = "M872 333H889V352L974 435H991V454H964L872 361Z";
const NOOK = "M747 488L780 458L792 467L748 508Z";

function Plan() {
  const cols = Array.from({ length: 66 }, (_, i) => 970 + (i - 29) * 24.83);
  const rows = Array.from({ length: 27 }, (_, i) => 502.5 + (i - 15) * 24.83);
  const grid = (c: string, cx = cols, ry = rows) => (
    <g stroke={c}>
      {cx.map((x) => <path key={x} d={`M${x.toFixed(1)} 138V795`} strokeWidth="1.5" strokeDasharray="5 3" />)}
      {ry.map((y) => <path key={y} d={`M250 ${y.toFixed(1)}H1867`} strokeDasharray="4 2" />)}
    </g>
  );
  return (
    <svg className="block h-full w-full" viewBox="250 138 1617 657" preserveAspectRatio="xMinYMin slice" fill="none" role="img" aria-label="Floor plan">
      <defs>
        <clipPath id="bldg"><path d={BUILDING} /></clipPath>
        <pattern id="mesh" width="8" height="8" patternUnits="userSpaceOnUse"><path d="M8 0H0V8" stroke="#5078b4" strokeWidth=".8" /></pattern>
      </defs>
      {grid("#c8c8c8")}
      <path d="M374 138V795M1566 138V795" stroke="#6e6ee6" strokeWidth="1.600" />
      <path d="M970 138V795" stroke="#aa5ab4" strokeWidth="1.600" />
      <path d="M250 502.500H1867" stroke="#8c1e8c" />
      <path d={BUILDING} fill="#f5b580" />
      <path d="M659 490H745V563H659Z" fill="#999" />
      {GREENS.map((d) => <path key={d} d={d} fill="#4ba04b" />)}
      <g clipPath="url(#bldg)">
        <g opacity=".22">{grid("#8c7864", cols.slice(15, 38), rows.slice(1, 26))}</g>
        <path d="M970 178V751M656 502.500H1147" stroke="#c85a64" strokeOpacity=".5" />
        <g stroke="#cdb48c" strokeDasharray="6 6" strokeWidth="14" strokeOpacity=".75">
          {WALLS.map((d) => <path key={d} d={d} />)}
          {INNER.map((d) => <path key={d} d={d} strokeWidth="9" strokeOpacity=".6" />)}
          {GREENS.map((d) => <path key={d} d={d} strokeWidth="12" stroke="#c8b48c" strokeOpacity=".9" />)}
          <path d="M659 490H745V563H659Z" strokeWidth="11" strokeOpacity="1" />
        </g>
      </g>
      <g fill="#fff" stroke="#222"><path d="M859 367H875L868 357Z" /><path d="M920 554H941V576Z" /><path d="M886 663L894 655V670Z" /></g>
      {WALLS.map((d) => <path key={d} d={d} stroke="#2828f0" strokeWidth="5.500" />)}
      {WALLS.map((d) => <path key={d} d={d} stroke="#e09a6a" strokeWidth="2.800" />)}
      <g stroke="#1e1eff" strokeWidth="1.500">{INNER.map((d) => <path key={d} d={d} />)}{GREENS.map((d) => <path key={d} d={d} />)}</g>
      <g stroke="#f0a032" strokeDasharray="4 9" strokeWidth="1.500">{INNER.map((d) => <path key={d} d={d} />)}</g>
      <path d="M656 178H724V253H656Z" fill="#fff" stroke="#222" strokeWidth="5" />
      <path d="M656 178H724V253H656Z" stroke="#faa528" strokeWidth="3" />
      <path d={BUILDING} stroke="#1e1e1e" strokeWidth="4.500" />
      <path d={BUILDING} stroke="#faa528" strokeWidth="3" />
      <g stroke="#3232e6" strokeDasharray="12 6">
        <path d="M758 368H800M890 368H1052M885 269H912M800 467H887M1008 467H1052M805 567H863M1008 567H1052M657 652H872M657 482H747M860 562.500H918" />
      </g>
      <path d={STRIP} fill="#78a0eb" /><path d={STRIP} fill="url(#mesh)" stroke="#1e1ef0" strokeWidth="1.600" />
      <path d="M872 361L964 455" stroke="#111" strokeWidth="1.600" />
      <path d="M930 392l4 3-3 2z" fill="#006e1e" stroke="#006e1e" />
      <path d="M960 452l8 4-8 7z" fill="#fff" stroke="#111" />
      <path d={NOOK} fill="#78a0eb" /><path d={NOOK} fill="url(#mesh)" stroke="#0a0ac8" strokeWidth="2" />
      <path d="M762 476l9 8" stroke="#ff0000" strokeWidth="2" />
      {CABINETS.map(([x, y, w, h]) => {
        const cx = x + w / 2, cy = y + h / 2;
        return (
          <g key={`${x}-${y}`}>
            <rect x={x} y={y} width={w} height={h} fill="#78a0eb" /><rect x={x} y={y} width={w} height={h} fill="url(#mesh)" stroke="#1414e6" strokeWidth="1.600" />
            <path d={`M${x + 1} ${cy}H${x + w - 1}M${cx} ${y + 1}V${y + h - 1}`} stroke="#ff0a0a" strokeWidth="1.500" />
            <path d={w > h ? `M${x + 1} ${cy}l6-3v6zM${x + w - 1} ${cy}l-6-3v6zM${cx - 2} ${cy}h4v4h-4z` : `M${cx} ${y + 1}l-3 7h6zM${cx} ${y + h - 1}l-3-7h6zM${cx - 2} ${cy}h4v4h-4z`} fill="#ff0a0a" />
            <path d={`M${cx - 3} ${cy - 3}l5 6M${cx + 3} ${cy - 4}v8`} stroke="#3c1428" strokeWidth="1.200" />
          </g>
        );
      })}
      {DOORS.map((d) => <g key={d}><path d={d} stroke="#1e1ef0" strokeWidth="6" /><path d={d} stroke="#111" strokeWidth="5" strokeDasharray="9 3" /></g>)}
      <path d="M662 178.500h26M878 178.500h28" stroke="#111" strokeWidth="4" /><path d="M663 178.500h24M879 178.500h26" stroke="#777" strokeWidth="1.500" />
      <path d="M832 317.500h27M1007 471v27" stroke="#1e1ef0" strokeWidth="4" />
      <path d="M932 316.700H960L1009 366.700V393M997.500 430V454M872 328H895" stroke="#222" />
      {ARROWS.map(([x, y]) => <g key={`${x}-${y}`}><path d={`M${x - 4} ${y}h6`} stroke="#111" /><path d={`M${x + 1} ${y - 2}l3.500 2-3.500 2z`} fill="#111" /></g>)}
      <g fontFamily="'DejaVu Sans', Verdana, sans-serif" fontSize="8" fill="#2a1c12">
        {WINGS.map((w) => w.items.map(([x, y, t], i) => <text key={`${w.dx}-${w.dy}-${i}`} x={w.dx + x / 3} y={w.dy + y / 3 + 3}>{t}</text>))}
        <g fill="#c89670"><text x="730" y="579">1'0" x 2'8"</text><text x="797" y="590">C.</text><text x="797" y="600">3'1</text><text x="837" y="600">0"</text></g>
      </g>
    </svg>
  );
}

/* ---------- centre and right ---------- */

const slider =
  "h-[17px] w-[140px] appearance-none bg-transparent [&::-webkit-slider-runnable-track]:h-1 [&::-webkit-slider-runnable-track]:border [&::-webkit-slider-runnable-track]:border-[#d2d2d2] [&::-webkit-slider-runnable-track]:bg-[#e7eaea] [&::-webkit-slider-thumb]:-mt-2 [&::-webkit-slider-thumb]:h-[18px] [&::-webkit-slider-thumb]:w-[11px] [&::-webkit-slider-thumb]:appearance-none [&::-webkit-slider-thumb]:border [&::-webkit-slider-thumb]:border-[#acacac] [&::-webkit-slider-thumb]:bg-[#f0f0f0]";

function Centre() {
  return (
    <main className="flex min-w-0 flex-1 flex-col border-x-4 border-[#d2d2d2] bg-white">
      <div className="flex min-h-0 flex-1">
        <div className="min-w-0 flex-1 overflow-hidden"><Plan /></div>
        <VBar top="h-[269px]" bottom="h-[278px]" />
      </div>
      <div className="flex h-[17px] shrink-0 items-center">
        <button aria-label="Scroll up" className="ml-[4px]"><Ico s={8} v={8}><path d="M0 6h8L4 2z" fill="#000" /></Ico></button>
        <button aria-label="Add sheet" className="ml-[7px]"><PlusIco s={13} /></button>
        <button aria-label="Previous sheet" className="ml-[7px]"><Ico s={8} v={8}><path d="M6 0v8L2 4z" fill="#000" /></Ico></button>
        <button className="ml-[9px] border-r border-[#888] pt-[3px] pr-[7px] text-xs leading-[14px] font-semibold text-[#000080]">cave_creek_medical_center</button>
        <button aria-label="Next sheet" className="mr-[3px] ml-auto"><Ico s={8} v={8}><path d="M2 0v8l4-4z" fill="#000" /></Ico></button>
        <div className="flex h-[17px] w-[153px] items-center border-x-[3px] border-y border-x-[#d2d2d2] border-y-[#efefef]">
          <span className="flex h-full w-[17px] items-center justify-center bg-[#efefef]"><Chev d="left" /></span>
          <span className="ml-[42px] h-full w-[35px] bg-[#cdcdcd]" />
          <span className="ml-auto flex h-full w-4 items-center justify-center bg-[#efefef]"><Chev d="right" /></span>
        </div>
        <input type="range" aria-label="Canvas zoom" defaultValue={45} className={`mr-[5px] ml-[4px] ${slider}`} />
      </div>
      <div className="flex h-5 shrink-0 items-center bg-[#f4f4f4] pt-[1px] pl-[1px] text-xs">
        <span>Ready</span>
        <button aria-label="Collapse pane" className="ml-auto"><Ico s={14} v={14}><path d="M1 1l6 6 6-6M1 7l6 6 6-6" stroke="#222" strokeWidth="1.200" /></Ico></button>
        <button aria-label="Maximize pane" className="mr-[3px] ml-[4px]"><Ico s={13} v={13}><path d="M.7.7h11.600v11.600H.7z" fill="#fff" stroke="#222" strokeWidth="1.300" /></Ico></button>
      </div>
      <div className="flex h-[182px] shrink-0 border-t-[3px] border-[#d2d2d2]">
        <div className="flex-1" />
        <VBar top="h-0" bottom="h-0" />
        <span className="w-px" />
      </div>
      <div className="flex h-[18px] shrink-0 items-center bg-[#efefef]">
        <span className="ml-[4px] flex opacity-40"><Chev d="left" /></span>
        <span className="mr-[8px] ml-auto flex opacity-40"><Chev d="right" /></span>
        <input type="range" aria-label="Pane zoom" defaultValue={47} className={`mr-[6px] ${slider}`} />
      </div>
    </main>
  );
}

function RightPanel() {
  const cards: [string, string, React.ReactNode][] = [
    ["Report", PURPLE, <><path d="M2 8h9v9H2z" fill={PURPLE} /><path d="M13 8.500h7M13 11h7M13 13.500h7M13 16h7" stroke="#666" /></>],
    ["Preview", GREEN, <path d="M5.500 8l11 5-11 5z" stroke={BLUE} strokeWidth="1.500" />],
    ["Sheet", BLUE, <><path d="M6.500 7.500h9v10h-9z" stroke={BLUE} strokeWidth="1.200" /><path d="M8 10h4" stroke="#aaa" strokeWidth="1.500" /></>],
  ];
  return (
    <aside className="flex w-8 shrink-0 flex-col border-r border-[#c4c7ce] bg-[#f4f4f4]">
      <button aria-label="Expand" className="flex h-[25px] items-center justify-center border-b border-l border-[#c4c7ce] bg-white pl-2"><Ico s={9} v={9}><path d="M4 1L1 4.500 4 8M8 1L5 4.500 8 8" stroke="#222" strokeWidth="1.200" /></Ico></button>
      <div className="flex-1" />
      <div className="border-y border-[#c4c7ce]"><Dots /></div>
      {cards.map(([t, c, g], i) => (
        <button key={t} aria-label={t} className={`flex h-7 items-center justify-center border-b border-l border-[#c4c7ce] ${i === 0 ? "bg-[#f0ffff]" : ""}`}>
          <Ico s={22} v={22}><path d="M.6.6h20.800v20.800H.6z" fill="#fff" stroke="#777" strokeWidth="1.200" /><path d="M0 0h22v4H0z" fill={c} />{g}</Ico>
        </button>
      ))}
      <div className="h-[28px] border-b border-l border-[#c4c7ce]" />
    </aside>
  );
}

export default function App() {
  return (
    <div className="flex h-screen flex-col overflow-hidden bg-[#1a1a1a] font-['Open_Sans','Noto_Sans',sans-serif] text-black">
      <div className="flex min-h-0 flex-1">
        <div className="flex min-w-0 flex-1 flex-col bg-[#f5f5f5]">
          <TitleBar />
          <div className="flex h-[23px] items-end text-xs" role="tablist">
            <button className="mb-[1px] flex h-[23px] w-14 items-center justify-center gap-2 border border-[#3c82be] bg-linear-to-b from-[#82bee6] to-[#4b9bdc] pt-[1px] text-white">File<svg width="7" height="5" viewBox="0 0 7 5" aria-hidden="true"><path d="M0 0h7L3.500 5z" fill="#fff" /></svg></button>
            <button role="tab" className="h-6 w-[91px] pt-[4px] text-center">Project Info</button>
            <button role="tab" aria-selected="true" className="z-10 -mb-px h-6 w-[59px] border border-b-0 border-[#d6d6d6] bg-white pt-[4px] text-center">Takeoff</button>
            <button role="tab" className="h-6 w-[86px] pt-[4px] text-center">Worksheet</button>
            <button role="tab" className="h-6 w-[52px] pt-[4px] text-center">Cloud</button>
          </div>
          <Ribbon />
          <div className="flex min-h-0 flex-1">
            <LeftPanel />
            <Centre />
            <RightPanel />
          </div>
        </div>
        <div className="flex w-2 shrink-0 flex-col overflow-hidden bg-[#0c0c0c]">
          <div className="h-[135px] border-b border-[#444] bg-[#2d2d2d]"><div className="h-[44px] rounded-br-lg bg-black" /></div>
          <span className="mt-[815px] pl-[3px] text-[11px] leading-3 text-[#8ca0d2]">R</span>
        </div>
      </div>
      <div className="h-2 shrink-0 border-t border-[#444]" />
    </div>
  );
}
